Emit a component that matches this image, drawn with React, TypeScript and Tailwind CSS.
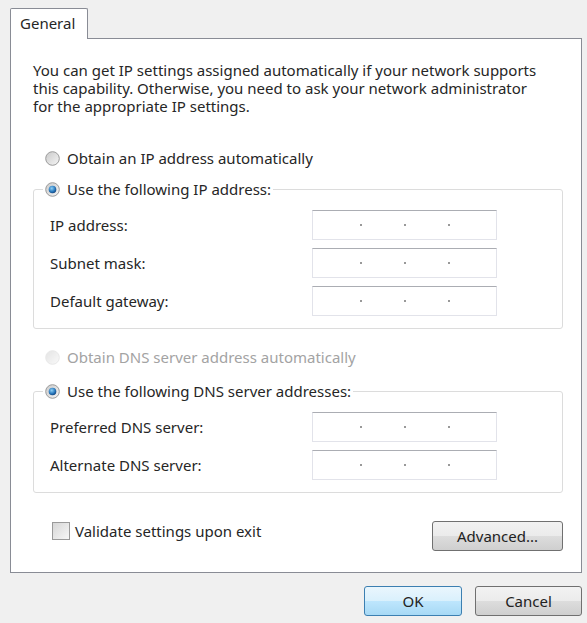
import React from 'react';

const font = { fontFamily: '"Noto Sans", "Open Sans", sans-serif' };

function Radio({ checked, disabled }: { checked?: boolean; disabled?: boolean }) {
  return (
    <svg width="15" height="15" viewBox="0 0 15 15" className="flex-shrink-0">
      <defs>
        <linearGradient id="rfill" x1="0" y1="0" x2="1" y2="1">
          <stop offset="0" stopColor="#c9c9c9" />
          <stop offset="1" stopColor="#f6f6f6" />
        </linearGradient>
        <radialGradient id="rdot" cx="0.4" cy="0.35" r="0.7">
          <stop offset="0" stopColor="#8fd0f5" />
          <stop offset="0.6" stopColor="#2b7bbf" />
          <stop offset="1" stopColor="#0f3f78" />
        </radialGradient>
      </defs>
      <circle cx="7.5" cy="7.5" r="6.8" fill="url(#rfill)" stroke={disabled ? '#d2d2d2' : '#9a9a9a'} strokeWidth="1" opacity={disabled ? 0.5 : 1} />
      {checked && <circle cx="7.5" cy="7.5" r="3.8" fill="url(#rdot)" />}
    </svg>
  );
}

function IpBox() {
  return (
    <div className="w-[185px] h-[30px] bg-white border border-[#e2e3ea] border-t-[#abadb3] flex items-center justify-center gap-[42px]">
      <span className="w-[2px] h-[2px] bg-[#777] rounded-full" />
      <span className="w-[2px] h-[2px] bg-[#777] rounded-full" />
      <span className="w-[2px] h-[2px] bg-[#777] rounded-full" />
    </div>
  );
}

function Row({ label }: { label: string }) {
  return (
    <div className="flex items-center">
      <span className="ml-[7px] w-[262px]">{label}</span>
      <IpBox />
    </div>
  );
}

function Group({ legend, rows }: { legend: string; rows: string[] }) {
  return (
    <fieldset className="w-[530px] border border-[#dcdcdc] rounded-[3px] px-[9px] pb-[12px]">
      <legend className="px-[2px] h-[20px] flex items-center gap-[7px]">
        <Radio checked />
        <span>{legend}</span>
      </legend>
      <div className="flex flex-col gap-[8px] pt-[11px]">
        {rows.map((r) => (
          <Row key={r} label={r} />
        ))}
      </div>
    </fieldset>
  );
}

const btn =
  'h-[30px] rounded-[3px] border border-[#707070] bg-[linear-gradient(#f2f2f2_0%,#ebebeb_50%,#dddddd_50%,#cfcfcf_100%)] text-[#222] flex items-center justify-center';

export default function App() {
  return (
    <div className="w-[587px] h-[623px] bg-[#f0f0f0] pt-[8px] pl-[10px] text-[15px] text-[#262626]" style={font}>
      <div className="relative z-10 -mb-px w-[78px] h-[31px] bg-white border border-b-0 border-[#898c95] rounded-tl-[2px] rounded-tr-[2px] pl-[9px] pt-[3px]">
        General
      </div>
      <div className="w-[572px] h-[535px] bg-white border border-[#898c95] pl-[22px] pt-[22px]">
        <p className="leading-[18px] whitespace-nowrap">
          You can get IP settings assigned automatically if your network supports
          <br />
          this capability. Otherwise, you need to ask your network administrator
          <br />
          for the appropriate IP settings.
        </p>

        <div className="mt-[33px] ml-[12px] h-[20px] flex items-center gap-[7px]">
          <Radio />
          <span>Obtain an IP address automatically</span>
        </div>
        <div className="mt-[11px]">
          <Group legend="Use the following IP address:" rows={['IP address:', 'Subnet mask:', 'Default gateway:']} />
        </div>

        <div className="mt-[18px] ml-[12px] h-[20px] flex items-center gap-[7px] text-[#a3a3a3]">
          <Radio disabled />
          <span>Obtain DNS server address automatically</span>
        </div>
        <div className="mt-[14px]">
          <Group legend="Use the following DNS server addresses:" rows={['Preferred DNS server:', 'Alternate DNS server:']} />
        </div>

        <div className="mt-[28px] w-[530px] flex items-start justify-between">
          <label className="ml-[19px] h-[20px] flex items-center gap-[5px]">
            <span className="w-[18px] h-[18px] border border-[#9a9a9a] bg-[linear-gradient(135deg,#d6d6d6,#f7f7f7)]" />
            <span>Validate settings upon exit</span>
          </label>
          <button className={`${btn} w-[131px]`}>Advanced...</button>
        </div>
      </div>

      <div className="mt-[13px] w-[572px] flex justify-end gap-[13px]">
        <button className="w-[98px] h-[30px] rounded-[3px] border border-[#3c7fb1] bg-[linear-gradient(#eaf6fd_0%,#d9f0fc_50%,#bee6fd_50%,#a7d9f5_100%)] text-[#222] flex items-center justify-center">
          OK
        </button>
        <button className={`${btn} w-[107px]`}>Cancel</button>
      </div>
    </div>
  );
}
